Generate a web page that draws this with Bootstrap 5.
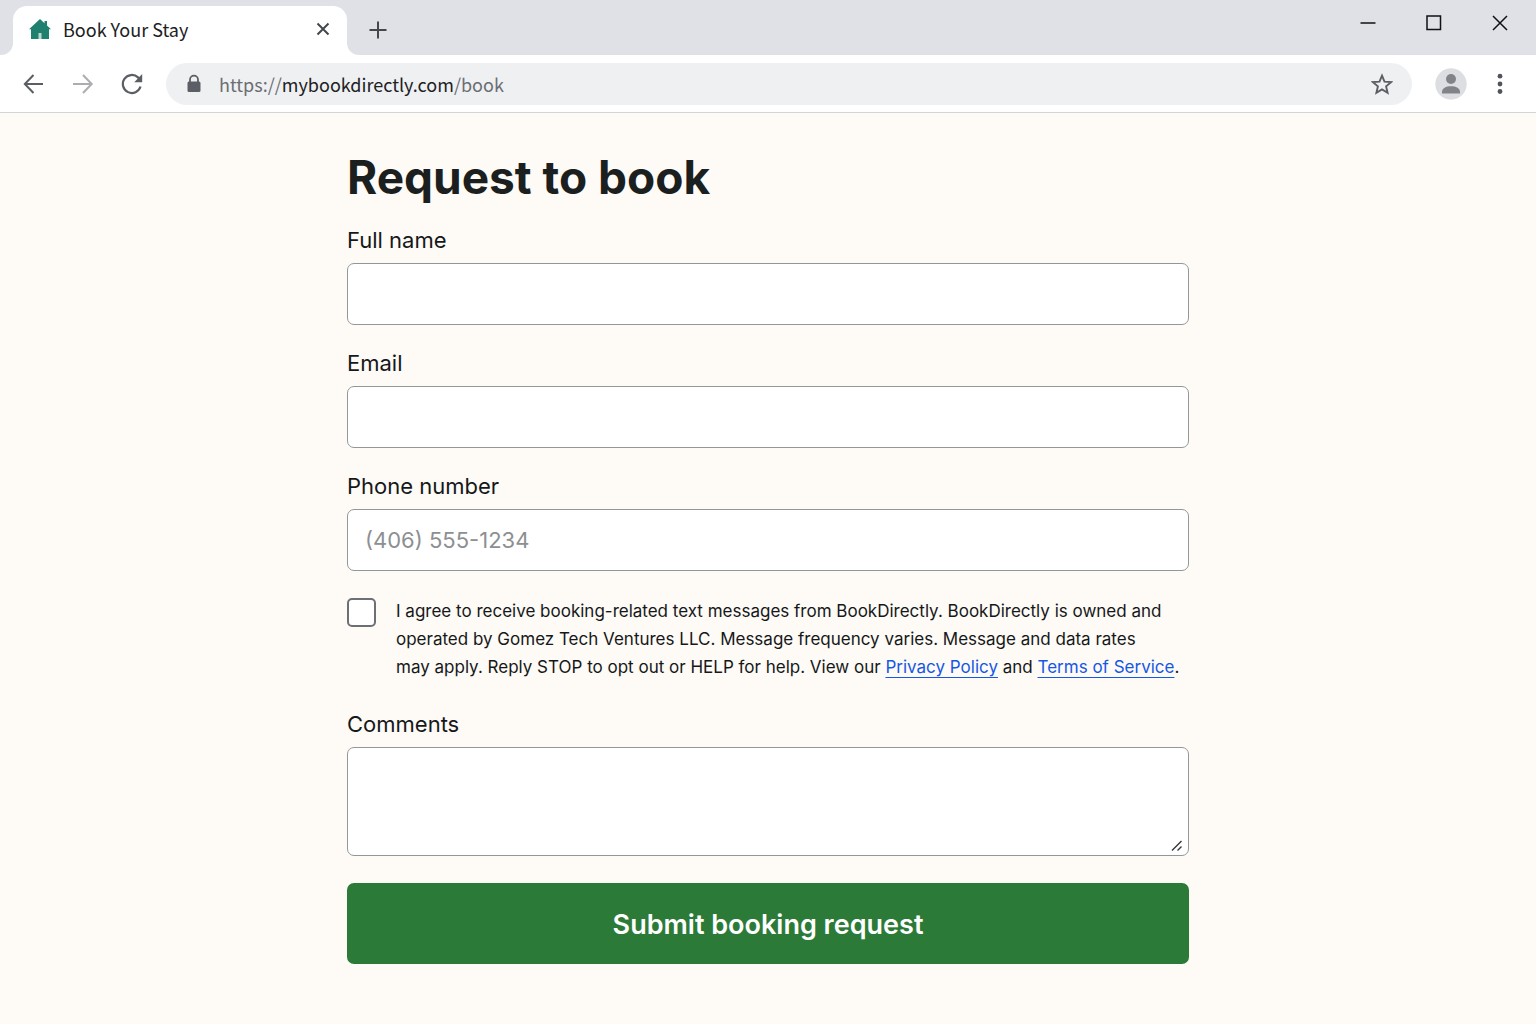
<!DOCTYPE html>
<html lang="en">
<head>
<meta charset="utf-8">
<meta name="viewport" content="width=device-width, initial-scale=1">
<title>Book Your Stay</title>
<link href="https://cdn.jsdelivr.net/npm/bootstrap@5.3.0/dist/css/bootstrap.min.css" rel="stylesheet">
<style>
  body { background: #fefaf5; color: #15181a; font-family: Inter, "Liberation Sans", sans-serif; }
  .browser-chrome { font-family: "Noto Sans CJK SC", "Open Sans", sans-serif; font-size: 18px; line-height: 24px; }
  .icon-btn { display: flex; padding: 0; border: 0; background: none; color: #5b5f65; }
  .icon-btn svg, .tab-icon { display: block; }

  .tab-strip { height: 55px; background: #dfe1e6; }
  .tab-lead { width: 13px; background: #fff; }
  .tab-lead::before, .tab-rest { content: ""; background: #dfe1e6; }
  .tab-lead::before { display: block; height: 100%; border-bottom-right-radius: 12px; }
  .active-tab { width: 334px; margin-top: 6px; padding: 0 17px 3px 16px; background: #fff; border-radius: 14px 14px 0 0; color: #202124; }
  .tab-tail { background: #fff; }
  .tab-rest { height: 100%; border-bottom-left-radius: 12px; padding: 0 27px 0 22px; }
  .window-controls { gap: 48px; height: 46px; }
  .window-controls .icon-btn { color: #111; }

  .toolbar-row { height: 58px; padding: 1px 25px 0 23px; background: #fff; border-bottom: 1px solid #d3d4da; }
  .nav-buttons { gap: 27px; }
  .address-bar { height: 42px; margin: 0 23px; padding: 0 19px; border-radius: 21px; background: #eff0f2; }
  .address-text { color: #6a6e73; text-decoration: none; }
  .address-text span { color: #202124; }

  .booking { max-width: 842px; padding: 36px 0 60px; }
  .booking h1 { font-size: 46px; line-height: 56px; font-weight: 700; margin-bottom: 21px; color: #1b1f20; }
  .field { margin-bottom: 25px; }
  .field .form-label { display: block; margin-bottom: 9px; font-size: 22px; line-height: 28px; }
  .field .form-control { height: 62px; padding: 0 17px; font-size: 22px; border: 1px solid #94979a; border-radius: 7px; background: #fff; }
  .field .form-control::placeholder { color: #8d8f92; }
  .field + .field { margin-top: -1px; }
  .field textarea.form-control { height: 109px; padding: 12px 17px; resize: none; }
  .grip { right: 6px; bottom: 4px; pointer-events: none; }
  .consent { gap: 20px; margin-bottom: 29px; padding-top: 1px; }
  .consent .form-check-input { width: 29px; height: 29px; margin: 1px 0 0; border: 2px solid #6c7074; border-radius: 5px; background-color: #fff; }
  .consent label { font-size: 17px; line-height: 28px; }
  .consent a { color: #1558e6; text-decoration-thickness: 1px; text-underline-offset: 4px; text-decoration-skip-ink: none; }
  .btn-submit { height: 81px; margin-top: 2px; padding-top: 10px; border: 0; border-radius: 7px; background: #2c7a38; color: #fff; font-size: 27px; font-weight: 600; }
  .btn-submit:hover { background: #23652d; color: #fff; }
</style>
</head>
<body>
<header class="browser-chrome">
  <div class="tab-strip d-flex">
    <div class="tab-lead"></div>
    <div class="active-tab d-flex align-items-center">
      <svg class="tab-icon" width="22" height="22" viewBox="0 0 22 22"><path d="M11 1 0 11.200h2V21h18V11.200h2L18 7.500V3h-2.500v2.200z" fill="#1f8070"/><path d="M9.500 15h3v6h-3z" fill="#b9d8d2"/></svg>
      <span class="flex-grow-1 ms-2 ps-1">Book Your Stay</span>
      <button class="icon-btn" type="button" aria-label="Close tab"><svg width="14" height="14" viewBox="0 0 14 14" fill="none" stroke="#44474b" stroke-width="2"><path d="M1.500 1.500l11 11M12.500 1.500l-11 11"/></svg></button>
    </div>
    <div class="tab-tail flex-grow-1">
      <div class="tab-rest d-flex justify-content-between">
        <button class="icon-btn align-self-center mt-1" type="button" aria-label="New tab"><svg width="18" height="18" viewBox="0 0 18 18" fill="none" stroke="#44474b" stroke-width="2"><path d="M9 .5v17M.5 9h17"/></svg></button>
        <div class="window-controls d-flex align-items-center">
          <button class="icon-btn" type="button" aria-label="Minimize"><svg width="18" height="18" viewBox="0 0 18 18" fill="none" stroke="currentColor" stroke-width="1.500"><path d="M1.500 9h15"/></svg></button>
          <button class="icon-btn" type="button" aria-label="Maximize"><svg width="18" height="18" viewBox="0 0 18 18" fill="none" stroke="currentColor" stroke-width="1.500"><rect x="2" y="2" width="13.500" height="13.500"/></svg></button>
          <button class="icon-btn" type="button" aria-label="Close"><svg width="18" height="18" viewBox="0 0 18 18" fill="none" stroke="currentColor" stroke-width="1.500"><path d="M2 2l14 14M16 2L2 16"/></svg></button>
        </div>
      </div>
    </div>
  </div>
  <div class="toolbar-row d-flex align-items-center">
    <div class="nav-buttons d-flex align-items-center">
      <button class="icon-btn" type="button" aria-label="Back"><svg width="22" height="22" viewBox="0 0 22 22" fill="none" stroke="currentColor" stroke-width="2"><path d="M20 11H2M10.500 2 1.800 11l8.700 9"/></svg></button>
      <button class="icon-btn" type="button" aria-label="Forward"><svg width="22" height="22" viewBox="0 0 22 22" fill="none" stroke="#abadb1" stroke-width="2"><path d="M1 11h18.500M11 2l8.700 9-8.700 9"/></svg></button>
      <button class="icon-btn" type="button" aria-label="Reload"><svg width="22" height="22" viewBox="0 0 22 22" fill="none" stroke="currentColor" stroke-width="2.200"><path d="M19.500 13.500A9 9 0 1 1 17 4.400l2 2"/><path d="M21.200 1v8.200h-8z" fill="currentColor" stroke="none"/></svg></button>
    </div>
    <div class="address-bar d-flex align-items-center flex-grow-1">
      <svg width="18" height="20" viewBox="0 0 18 20"><path d="M5 8.500V5.700a4 4 0 0 1 8 0v2.800" fill="none" stroke="#5b5f65" stroke-width="1.800"/><rect x="2.500" y="7.500" width="13" height="10.500" rx="1.500" fill="#5b5f65"/></svg>
      <a class="address-text flex-grow-1 ms-3" href="#">https://<span>mybookdirectly.com</span>/book</a>
      <button class="icon-btn" type="button" aria-label="Bookmark"><svg width="22" height="22" viewBox="0 0 22 22" fill="none" stroke="currentColor" stroke-width="1.900"><path d="M11 2.600l2.500 6 6.600.500-5 4.300 1.500 6.400L11 16.400l-5.600 3.400 1.500-6.400-5-4.300 6.600-.500z"/></svg></button>
    </div>
    <button class="icon-btn" type="button" aria-label="Profile"><svg width="32" height="32" viewBox="0 0 32 32"><circle cx="16" cy="16" r="15.700" fill="#dcdee2"/><circle cx="16" cy="11" r="5" fill="#808388"/><path d="M7 25.500v-1.500c0-4 4-5.800 9-5.800s9 1.800 9 5.800v1.500z" fill="#808388"/></svg></button>
    <button class="icon-btn ms-4" type="button" aria-label="Menu"><svg width="20" height="22" viewBox="0 0 20 22" fill="#50555d"><circle cx="9" cy="3.200" r="2.400"/><circle cx="9" cy="11" r="2.400"/><circle cx="9" cy="18.500" r="2.400"/></svg></button>
  </div>
</header>

<main class="container booking">
  <h1>Request to book</h1>
  <form>
    <div class="field">
      <label class="form-label" for="fullName">Full name</label>
      <input class="form-control" id="fullName" type="text">
    </div>
    <div class="field">
      <label class="form-label" for="email">Email</label>
      <input class="form-control" id="email" type="email">
    </div>
    <div class="field">
      <label class="form-label" for="phone">Phone number</label>
      <input class="form-control" id="phone" type="tel" placeholder="(406) 555-1234">
    </div>
    <div class="consent d-flex align-items-start">
      <input class="form-check-input flex-shrink-0" id="smsConsent" type="checkbox">
      <label for="smsConsent">I agree to receive booking-related text messages from BookDirectly. BookDirectly is owned and operated by Gomez Tech Ventures LLC. Message frequency varies. Message and data rates<br> may apply. Reply STOP to opt out or HELP for help. View our <a href="#">Privacy Policy</a> and <a href="#">Terms of Service</a>.</label>
    </div>
    <div class="field">
      <label class="form-label" for="comments">Comments</label>
      <div class="position-relative">
        <textarea class="form-control" id="comments"></textarea>
        <svg class="grip position-absolute" width="12" height="12" viewBox="0 0 12 12" stroke="#33373a" stroke-width="1.400"><path d="M1 10.500 10.500 1M6.500 10.500l4-4"/></svg>
      </div>
    </div>
    <button class="btn btn-submit w-100" type="submit">Submit booking request</button>
  </form>
</main>
<script src="https://cdn.jsdelivr.net/npm/bootstrap@5.3.0/dist/js/bootstrap.bundle.min.js"></script>
</body>
</html>
